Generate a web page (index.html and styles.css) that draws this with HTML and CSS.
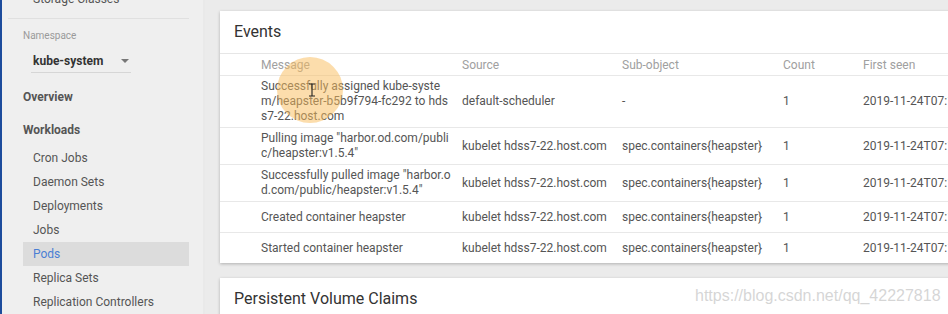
FILE: index.html
```html
<!DOCTYPE html>
<html lang="en">
<head>
    <meta charset="UTF-8">
    <title>Pods - Kubernetes Dashboard</title>
    <link rel="stylesheet" href="styles.css">
</head>
<body>
    <aside class="sidebar">
        <a class="nav-sub nav-cut" href="#">Storage Classes</a>
        <div class="nav-divider"></div>

        <div class="ns-label">Namespace</div>
        <div class="ns-select">
            <span>kube-system</span>
            <span class="ns-arrow"></span>
        </div>

        <a class="nav-top overview" href="#">Overview</a>
        <a class="nav-top workloads" href="#">Workloads</a>
        <a class="nav-sub" href="#">Cron Jobs</a>
        <a class="nav-sub" href="#">Daemon Sets</a>
        <a class="nav-sub" href="#">Deployments</a>
        <a class="nav-sub" href="#">Jobs</a>
        <a class="nav-sub active" href="#">Pods</a>
        <a class="nav-sub" href="#">Replica Sets</a>
        <a class="nav-sub" href="#">Replication Controllers</a>
    </aside>

    <main class="content">
        <section class="card">
            <h2 class="card-title">Events</h2>
            <table class="events">
                <colgroup>
                    <col class="c-msg">
                    <col class="c-src">
                    <col class="c-sub">
                    <col class="c-count">
                    <col class="c-seen">
                </colgroup>
                <thead>
                    <tr>
                        <th>Message</th>
                        <th>Source</th>
                        <th>Sub-object</th>
                        <th>Count</th>
                        <th>First seen</th>
                    </tr>
                </thead>
                <tbody>
                    <tr>
                        <td>Successfully assigned kube-system/heapster-b5b9f794-fc292 to hdss7-22.host.com</td>
                        <td>default-scheduler</td>
                        <td>-</td>
                        <td>1</td>
                        <td>2019-11-24T07:19:05Z</td>
                    </tr>
                    <tr>
                        <td>Pulling image "harbor.od.com/public/heapster:v1.5.4"</td>
                        <td>kubelet hdss7-22.host.com</td>
                        <td>spec.containers{heapster}</td>
                        <td>1</td>
                        <td>2019-11-24T07:19:07Z</td>
                    </tr>
                    <tr>
                        <td>Successfully pulled image "harbor.od.com/public/heapster:v1.5.4"</td>
                        <td>kubelet hdss7-22.host.com</td>
                        <td>spec.containers{heapster}</td>
                        <td>1</td>
                        <td>2019-11-24T07:19:12Z</td>
                    </tr>
                    <tr>
                        <td>Created container heapster</td>
                        <td>kubelet hdss7-22.host.com</td>
                        <td>spec.containers{heapster}</td>
                        <td>1</td>
                        <td>2019-11-24T07:19:13Z</td>
                    </tr>
                    <tr>
                        <td>Started container heapster</td>
                        <td>kubelet hdss7-22.host.com</td>
                        <td>spec.containers{heapster}</td>
                        <td>1</td>
                        <td>2019-11-24T07:19:13Z</td>
                    </tr>
                </tbody>
            </table>
        </section>

        <section class="card">
            <h2 class="card-title">Persistent Volume Claims</h2>
        </section>
    </main>

    <!-- screen recording: cursor highlight -->
    <div class="cursor-spot"></div>
    <svg class="cursor-ibeam" width="8" height="14" viewBox="0 0 8 14">
        <path d="M1 1h2.5L4 1.6 4.5 1H7M4 1.6v10.8M1 13h2.5l.5-.6.5.6H7" fill="none" stroke="#222" stroke-width="1.1"/>
    </svg>

    <div class="watermark">https://blog.csdn.net/qq_42227818</div>
</body>
</html>
```

FILE: styles.css
```css
body {
    margin: 0;
    height: 314px;
    overflow: hidden;
    display: flex;
    font-family: Roboto, "Liberation Sans", sans-serif;
    background-color: #ebebeb;
    color: #555;
}

a {
    text-decoration: none;
    color: inherit;
}

/* 左側選單 */
.sidebar {
    width: 201px;
    flex-shrink: 0;
    background-color: #efefef;
    border-left: 2px solid #1d4c9c;
    border-right: 2px solid #e9e9e9;
    display: flex;
    flex-direction: column;
    margin-top: -13px;
}

.nav-sub {
    display: block;
    height: 24px;
    line-height: 24px;
    margin-left: 21px;
    width: 156px;
    padding-left: 10px;
    font-size: 12px;
    color: #555;
}

.nav-sub.active {
    background-color: #dcdcdc;
    color: #4a7fd4;
}

.nav-divider {
    height: 1px;
    background-color: #e0e0e0;
    margin: 7px 14px 0 6px;
}

.ns-label {
    margin: 10px 0 0 21px;
    font-size: 10px;
    line-height: 14px;
    color: #9a9a9a;
}

.ns-select {
    margin: 7px 0 0 29px;
    width: 98px;
    padding-left: 2px;
    height: 22px;
    line-height: 22px;
    border-bottom: 1px solid #d6d6d6;
    display: flex;
    justify-content: space-between;
    align-items: center;
    font-size: 12px;
    font-weight: bold;
    color: #333;
}

.ns-arrow {
    width: 0;
    height: 0;
    border-left: 4px solid transparent;
    border-right: 4px solid transparent;
    border-top: 4px solid #777;
    margin-right: 2px;
}

.nav-top {
    display: block;
    margin-left: 21px;
    font-size: 12px;
    font-weight: bold;
    line-height: 16px;
    color: #555;
}

.overview {
    margin-top: 16px;
}

.workloads {
    margin-top: 17px;
    margin-bottom: 8px;
}

/* 主要內容 */
.content {
    flex: 1;
    padding: 11px 0 0 15px;
    overflow: hidden;
}

.card {
    width: 780px;
    background-color: #fff;
    box-shadow: 0 1px 3px rgba(0, 0, 0, 0.25);
    margin-bottom: 15px;
}

.card-title {
    margin: 0;
    height: 42px;
    line-height: 42px;
    padding-left: 14px;
    font-size: 16px;
    font-weight: normal;
    color: #333;
    border-bottom: 1px solid #e6e6e6;
}

.events {
    width: 780px;
    table-layout: fixed;
    border-collapse: collapse;
    font-size: 12px;
}

.c-msg { width: 242px; }
.c-src { width: 160px; }
.c-sub { width: 161px; }
.c-count { width: 80px; }
.c-seen { width: 137px; }

.events th {
    height: 21px;
    padding: 0;
    text-align: left;
    font-weight: normal;
    color: #a0a0a0;
}

.events td {
    height: 24px;
    padding: 3px 10px 3px 0;
    line-height: 15px;
    vertical-align: middle;
    border-top: 1px solid #e8e8e8;
    word-break: break-all;
}

.events td:last-child {
    white-space: nowrap;
    padding-right: 0;
}

.events th:first-child,
.events td:first-child {
    padding-left: 41px;
}

/* 游標標記 */
.cursor-spot {
    position: absolute;
    left: 277px;
    top: 57px;
    width: 66px;
    height: 66px;
    border-radius: 50%;
    background-color: rgba(250, 188, 90, 0.5);
}

.cursor-ibeam {
    position: absolute;
    left: 308px;
    top: 83px;
}

.watermark {
    position: absolute;
    left: 695px;
    top: 287px;
    font-family: "Liberation Sans", Arial, sans-serif;
    font-size: 16px;
    color: rgba(200, 200, 200, 0.75);
}
```
